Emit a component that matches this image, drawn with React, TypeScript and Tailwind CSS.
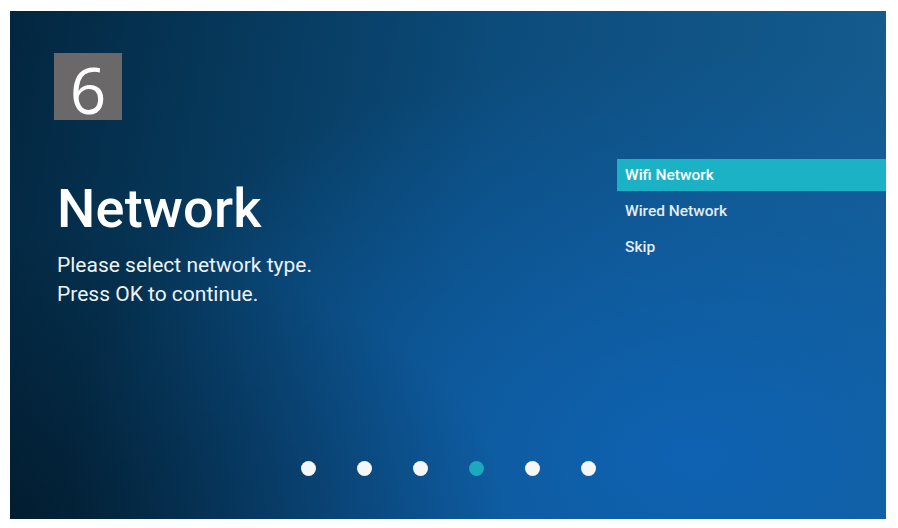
import React from 'react';

const menuItems = ['Wifi Network', 'Wired Network', 'Skip'];
const dots = [0, 1, 2, 3, 4, 5];

const App: React.FC = () => {
  const selected = 0;
  const activeDot = 3;

  return (
    <div className="w-[898px] h-[528px] bg-white pl-[10px] pt-[11px] font-['Roboto',_'Liberation_Sans',_sans-serif]">
      <div className="w-[876px] h-[508px] flex flex-col text-white bg-[radial-gradient(ellipse_at_0%_100%,rgba(0,18,32,0.6)_0%,rgba(0,18,32,0)_40%),radial-gradient(ellipse_at_78%_88%,#0e62b2_0%,rgba(14,98,178,0)_65%),linear-gradient(100deg,#03263f_0%,#063759_22%,#0c4c7c_52%,#165e92_100%)]">
        {/* step badge */}
        <div className="pt-[42px] pl-[44px]">
          <div className="w-[68px] h-[67px] bg-[#6a6868] flex items-center justify-center">
            <span className="text-[64px] leading-none font-normal font-['Open_Sans',_sans-serif] pt-[6px]">6</span>
          </div>
        </div>

        <div className="flex mt-[39px]">
          <div className="w-[607px] pl-[47px] pt-[18px]">
            <h1 className="text-[54px] leading-[64px] font-medium tracking-[0.2px]">Network</h1>
            <div className="mt-[10px] text-[21px] leading-[29px] text-[#eef3f7]">
              <p>Please select network type.</p>
              <p>Press OK to continue.</p>
            </div>
          </div>

          <ul className="flex-1 flex flex-col gap-[4px]">
            {menuItems.map((item, i) => (
              <li
                key={item}
                className={
                  i === selected
                    ? 'h-8 flex items-center pl-2 pt-px text-[15.5px] font-medium bg-[#1bb2c6]'
                    : 'h-8 flex items-center pl-2 pt-px text-[15.5px] font-medium text-[#e4edf5]'
                }
              >
                {item}
              </li>
            ))}
          </ul>
        </div>

        <div className="mt-auto pb-[43px] flex justify-center gap-[41px]">
          {dots.map((d) => (
            <span
              key={d}
              className={d === activeDot ? 'w-[15px] h-[15px] rounded-full bg-[#1aa9c0]' : 'w-[15px] h-[15px] rounded-full bg-[#f4f6f8]'}
            />
          ))}
        </div>
      </div>
    </div>
  );
};

export default App;
